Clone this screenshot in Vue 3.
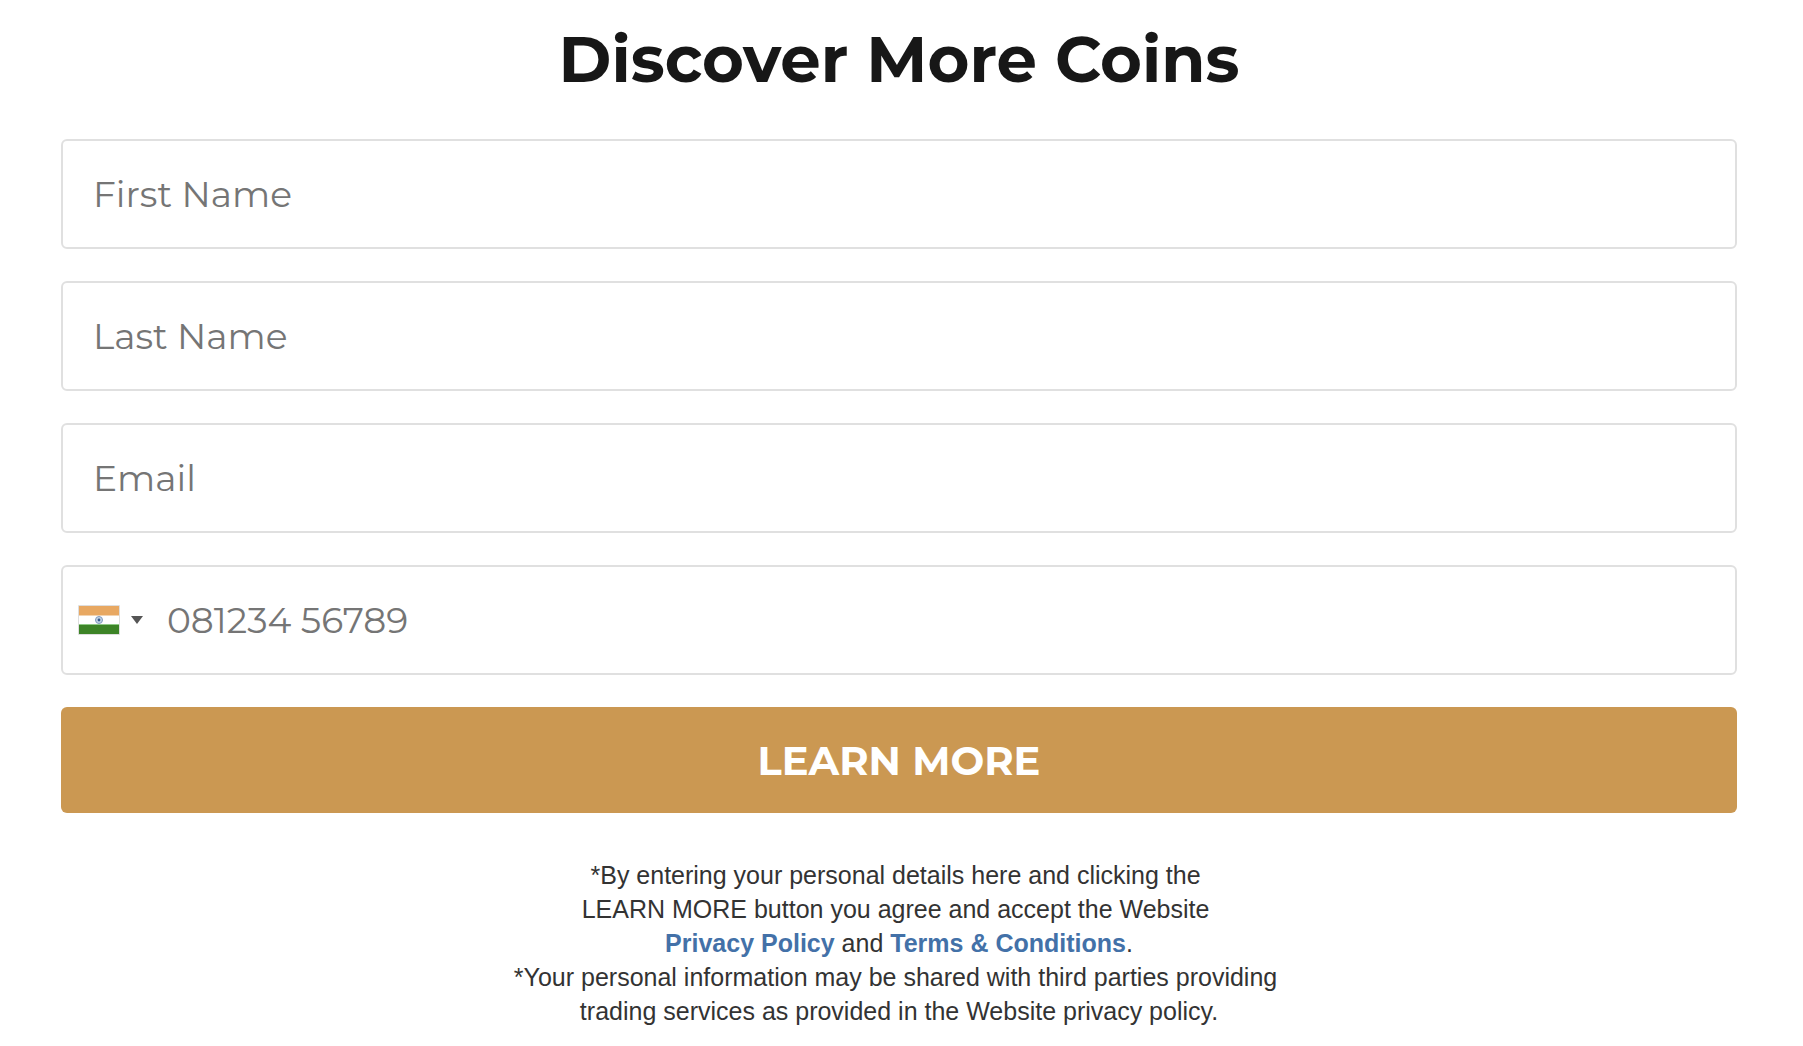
<script setup>
import { reactive } from 'vue'

const fields = [
  { key: 'firstName', label: 'First Name', type: 'text', autocomplete: 'given-name' },
  { key: 'lastName', label: 'Last Name', type: 'text', autocomplete: 'family-name' },
  { key: 'email', label: 'Email', type: 'email', autocomplete: 'email' },
]

const form = reactive({ firstName: '', lastName: '', email: '', country: 'in', phone: '' })
</script>

<template>
  <main class="signup">
    <h1 class="title">Discover More Coins</h1>

    <form class="form" @submit.prevent>
      <input
        v-for="field in fields"
        :key="field.key"
        v-model="form[field.key]"
        class="field text-input"
        :type="field.type"
        :name="field.key"
        :placeholder="field.label"
        :aria-label="field.label"
        :autocomplete="field.autocomplete"
      />

      <div class="field phone">
        <div class="country">
          <svg class="flag" viewBox="0 0 42 30" aria-hidden="true">
            <rect width="42" height="30" rx="1" fill="#dedede" />
            <rect x="1" y="1" width="40" height="10" fill="#e8a862" />
            <rect x="1" y="11" width="40" height="8" fill="#fff" />
            <rect x="1" y="10" width="40" height="1" fill="#f3d3b0" />
            <rect x="1" y="19" width="40" height="1" fill="#8fcb86" />
            <rect x="1" y="20" width="40" height="9" fill="#3d8427" />
            <circle cx="21" cy="15" r="3.5" fill="#c3d5e8" stroke="#8099bd" />
            <circle cx="21" cy="15" r="1.4" fill="#36598d" />
          </svg>
          <svg class="arrow" viewBox="0 0 12 8" aria-hidden="true">
            <path d="M0 0H12L6 8Z" fill="#555" />
          </svg>
          <select v-model="form.country" class="country-select" aria-label="Country">
            <option value="in">India</option>
          </select>
        </div>
        <input
          v-model="form.phone"
          class="phone-input"
          type="tel"
          name="phone"
          placeholder="081234 56789"
          aria-label="Phone number"
          autocomplete="tel-national"
        />
      </div>

      <button class="submit" type="submit">LEARN MORE</button>
    </form>

    <p class="legal">
      *By entering your personal details here and clicking the&nbsp;<br />
      LEARN MORE button you agree and accept the Website&nbsp;<br />
      <a href="#privacy">Privacy Policy</a> and <a href="#terms">Terms &amp; Conditions</a>.<br />
      *Your personal information may be shared with third parties providing&nbsp;<br />
      trading services as provided in the Website privacy policy.
    </p>
  </main>
</template>

<style>
body {
  margin: 0;
  background: #fff;
}
</style>

<style scoped>
.signup {
  box-sizing: border-box;
  padding: 19px 66px 16px 61px;
  font-family: Montserrat, Inter, sans-serif;
}

.title {
  margin: 0 0 40px;
  color: #171717;
  font-size: 64px;
  font-weight: 700;
  line-height: 80px;
  text-align: center;
}

.form {
  display: flex;
  flex-direction: column;
  gap: 32px;
}

.field {
  box-sizing: border-box;
  width: 100%;
  height: 110px;
  border: 2px solid #e0e0e0;
  border-radius: 6px;
  background: #fff;
}

.text-input {
  padding: 0 30px;
}

.text-input,
.phone-input {
  color: #333;
  font-family: inherit;
  font-size: 36px;
}

.text-input::placeholder,
.phone-input::placeholder {
  color: #757575;
  opacity: 1;
}

.phone {
  display: flex;
}

.country {
  position: relative;
  display: flex;
  align-items: center;
  gap: 11px;
  padding: 0 24px 0 15px;
}

.flag {
  width: 42px;
  height: 30px;
}

.arrow {
  width: 12px;
  height: 8px;
}

.country-select {
  position: absolute;
  inset: 0;
  width: 100%;
  opacity: 0;
  cursor: pointer;
}

.phone-input {
  flex: 1;
  min-width: 0;
  padding: 0;
  border: 0;
  background: transparent;
}

.submit {
  height: 106px;
  padding: 0;
  border: 0;
  border-radius: 6px;
  background: #cb9852;
  color: #fff;
  font-family: inherit;
  font-size: 40px;
  font-weight: 700;
  cursor: pointer;
}

.legal {
  margin: 45px 0 0;
  color: #333;
  font-family: "Liberation Sans", Arial, sans-serif;
  font-size: 25px;
  line-height: 34px;
  text-align: center;
}

.legal a {
  color: #4371a8;
  font-weight: 700;
  text-decoration: none;
}
</style>
